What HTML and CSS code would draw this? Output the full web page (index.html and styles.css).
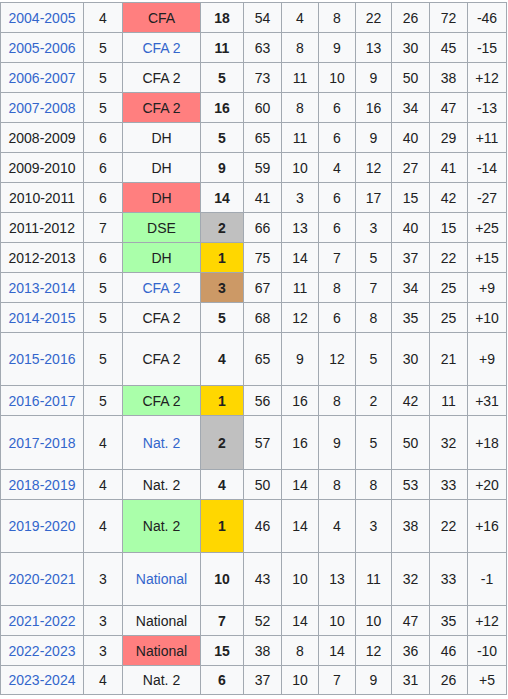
FILE: index.html
```html
<!DOCTYPE html>
<html lang="fr">
<head>
<meta charset="utf-8">
<title>Saisons</title>
<link rel="stylesheet" href="styles.css">
</head>
<body>
<table class="wikitable">
<tbody>
<tr><td class="lnk">2004-2005</td><td>4</td><td class="red">CFA</td><td class="pos">18</td><td>54</td><td>4</td><td>8</td><td>22</td><td>26</td><td>72</td><td>-46</td></tr>
<tr><td class="lnk">2005-2006</td><td>5</td><td class="lnk">CFA 2</td><td class="pos">11</td><td>63</td><td>8</td><td>9</td><td>13</td><td>30</td><td>45</td><td>-15</td></tr>
<tr><td class="lnk">2006-2007</td><td>5</td><td>CFA 2</td><td class="pos">5</td><td>73</td><td>11</td><td>10</td><td>9</td><td>50</td><td>38</td><td>+12</td></tr>
<tr><td class="lnk">2007-2008</td><td>5</td><td class="red">CFA 2</td><td class="pos">16</td><td>60</td><td>8</td><td>6</td><td>16</td><td>34</td><td>47</td><td>-13</td></tr>
<tr><td>2008-2009</td><td>6</td><td>DH</td><td class="pos">5</td><td>65</td><td>11</td><td>6</td><td>9</td><td>40</td><td>29</td><td>+11</td></tr>
<tr><td>2009-2010</td><td>6</td><td>DH</td><td class="pos">9</td><td>59</td><td>10</td><td>4</td><td>12</td><td>27</td><td>41</td><td>-14</td></tr>
<tr><td>2010-2011</td><td>6</td><td class="red">DH</td><td class="pos">14</td><td>41</td><td>3</td><td>6</td><td>17</td><td>15</td><td>42</td><td>-27</td></tr>
<tr><td>2011-2012</td><td>7</td><td class="green">DSE</td><td class="pos silver">2</td><td>66</td><td>13</td><td>6</td><td>3</td><td>40</td><td>15</td><td>+25</td></tr>
<tr><td>2012-2013</td><td>6</td><td class="green">DH</td><td class="pos gold">1</td><td>75</td><td>14</td><td>7</td><td>5</td><td>37</td><td>22</td><td>+15</td></tr>
<tr><td class="lnk">2013-2014</td><td>5</td><td class="lnk">CFA 2</td><td class="pos bronze">3</td><td>67</td><td>11</td><td>8</td><td>7</td><td>34</td><td>25</td><td>+9</td></tr>
<tr><td class="lnk">2014-2015</td><td>5</td><td>CFA 2</td><td class="pos">5</td><td>68</td><td>12</td><td>6</td><td>8</td><td>35</td><td>25</td><td>+10</td></tr>
<tr><td class="lnk">2015-2016</td><td>5</td><td>CFA 2</td><td class="pos">4</td><td>65</td><td>9</td><td>12</td><td>5</td><td>30</td><td>21</td><td>+9</td></tr>
<tr><td class="lnk">2016-2017</td><td>5</td><td class="green">CFA 2</td><td class="pos gold">1</td><td>56</td><td>16</td><td>8</td><td>2</td><td>42</td><td>11</td><td>+31</td></tr>
<tr><td class="lnk">2017-2018</td><td>4</td><td class="lnk">Nat. 2</td><td class="pos silver">2</td><td>57</td><td>16</td><td>9</td><td>5</td><td>50</td><td>32</td><td>+18</td></tr>
<tr><td class="lnk">2018-2019</td><td>4</td><td>Nat. 2</td><td class="pos">4</td><td>50</td><td>14</td><td>8</td><td>8</td><td>53</td><td>33</td><td>+20</td></tr>
<tr><td class="lnk">2019-2020</td><td>4</td><td class="green">Nat. 2</td><td class="pos gold">1</td><td>46</td><td>14</td><td>4</td><td>3</td><td>38</td><td>22</td><td>+16</td></tr>
<tr><td class="lnk">2020-2021</td><td>3</td><td class="lnk">National</td><td class="pos">10</td><td>43</td><td>10</td><td>13</td><td>11</td><td>32</td><td>33</td><td>-1</td></tr>
<tr><td class="lnk">2021-2022</td><td>3</td><td>National</td><td class="pos">7</td><td>52</td><td>14</td><td>10</td><td>10</td><td>47</td><td>35</td><td>+12</td></tr>
<tr><td class="lnk">2022-2023</td><td>3</td><td class="red">National</td><td class="pos">15</td><td>38</td><td>8</td><td>14</td><td>12</td><td>36</td><td>46</td><td>-10</td></tr>
<tr><td class="lnk">2023-2024</td><td>4</td><td>Nat. 2</td><td class="pos">6</td><td>37</td><td>10</td><td>7</td><td>9</td><td>31</td><td>26</td><td>+5</td></tr>
</tbody>
</table>
</body>
</html>
```

FILE: styles.css
```css
html, body {
  margin: 0;
  padding: 0;
  background: #ffffff;
}

body {
  padding-top: 2px;
  font-family: "Liberation Sans", Arial, sans-serif;
  font-size: 14px;
  color: #202122;
}

.wikitable {
  display: grid;
  grid-template-columns: 82px 38px 77px 42px 37px 36px 36px 35px 37px 37px 38px;
  grid-template-rows: repeat(11, 29px) 52px 29px 53px 29px 52px 52px 29px 29px 28px;
  gap: 1px;
  padding: 1px;
  width: max-content;
  background: #a2a9b1;
  border-spacing: 0;
}

.wikitable tbody,
.wikitable tr {
  display: contents;
}

.wikitable td {
  display: flex;
  align-items: center;
  justify-content: center;
  padding: 0;
  background: #f8f9fa;
  white-space: nowrap;
  line-height: 1;
}

.wikitable td.lnk {
  color: #3366cc;
}

.wikitable td.pos {
  font-weight: bold;
}

.wikitable td.red {
  background: #ff7f7f;
}

.wikitable td.green {
  background: #aaffaa;
}

.wikitable td.gold {
  background: #ffd700;
}

.wikitable td.silver {
  background: #c0c0c0;
}

.wikitable td.bronze {
  background: #cc9966;
}
```
